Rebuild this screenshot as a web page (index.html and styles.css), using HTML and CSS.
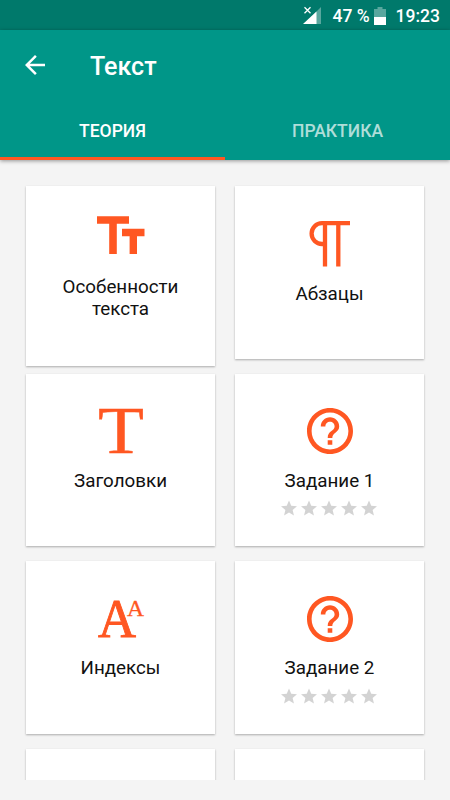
FILE: index.html
```html
<!DOCTYPE html>
<html lang="ru">
<head>
<meta charset="utf-8">
<title>Текст</title>
<link rel="stylesheet" href="styles.css">
</head>
<body>
<svg class="defs" width="0" height="0" aria-hidden="true">
  <symbol id="star" viewBox="2 2 20 19"><path d="M12 17.27 18.18 21l-1.64-7.03L22 9.24l-7.19-.61L12 2 9.19 8.63 2 9.24l5.46 4.73L5.82 21z"/></symbol>
  <symbol id="help" viewBox="2 2 20 20"><path d="M11 18h2v-2h-2v2zm1-16C6.48 2 2 6.48 2 12s4.48 10 10 10 10-4.48 10-10S17.52 2 12 2zm0 18c-4.41 0-8-3.59-8-8s3.59-8 8-8 8 3.59 8 8-3.59 8-8 8zm0-14c-2.21 0-4 1.79-4 4h2c0-1.1.9-2 2-2s2 .9 2 2c0 2-3 1.75-3 5h2c0-2.25 3-2.5 3-5 0-2.21-1.79-4-4-4z"/></symbol>
</svg>
<div class="status">
  <svg class="signal" width="20" height="20" viewBox="0 0 20 20">
    <path d="M18 1v17H1z" fill="#fff" fill-opacity=".35"/>
    <path d="M13.5 5.5V18H0z" fill="#fff"/>
    <path d="M0 0h8.5v8.5H0z" fill="#00796b"/>
    <path d="M1.5 1.2l6 6M7.5 1.2l-6 6" stroke="#fff" stroke-width="1.3"/>
  </svg>
  <span class="percent">47 %</span>
  <svg class="battery" width="12" height="18" viewBox="0 0 12 18">
    <path d="M3.5 0h5v2H12v8H0V2h3.5z" fill="#fff" fill-opacity=".35"/>
    <path d="M0 10h12v8H0z" fill="#fff"/>
  </svg>
  <span class="clock">19:23</span>
</div>
<header class="header">
  <div class="bar">
    <svg class="back" width="20" height="20" viewBox="4 4 16 16"><path d="M20 11H7.83l5.59-5.59L12 4l-8 8 8 8 1.41-1.41L7.83 13H20v-2z" fill="#fff"/></svg>
    <h1 class="title">Текст</h1>
  </div>
  <nav class="tabs">
    <a class="tab tab-active">ТЕОРИЯ</a>
    <a class="tab">ПРАКТИКА</a>
  </nav>
</header>
<main class="grid">
  <section class="card card-tall">
    <svg class="icon icon-size" width="48" height="38" viewBox="0 0 48 38"><path d="M0 4h32M16 4v34" stroke-width="7.6"/><path d="M25 16.5h22.5M36.3 16v22" stroke-width="7.4"/></svg>
    <p class="label">Особенности<br>текста</p>
  </section>
  <section class="card card-para">
    <svg class="icon icon-line" width="41" height="46" viewBox="0 0 41 46"><path d="M41 2.2H13a10.4 10.4 0 0 0 0 20.8h3M16 2v43.5M29.3 2v43.5" stroke-width="4.3"/></svg>
    <p class="label">Абзацы</p>
  </section>
  <section class="card">
    <svg class="icon glyph" width="46" height="46" viewBox="0 0 46 46"><text class="glyph-head" x="0" y="45" font-size="68" textLength="46" lengthAdjust="spacingAndGlyphs">T</text></svg>
    <p class="label">Заголовки</p>
  </section>
  <section class="card">
    <svg class="icon help"><use href="#help"/></svg>
    <p class="label">Задание 1</p>
    <div class="stars"><svg><use href="#star"/></svg><svg><use href="#star"/></svg><svg><use href="#star"/></svg><svg><use href="#star"/></svg><svg><use href="#star"/></svg></div>
  </section>
  <section class="card">
    <svg class="icon glyph" width="46" height="46" viewBox="0 0 46 46"><text class="glyph-heavy" x="0" y="40.5" font-size="54" textLength="38" lengthAdjust="spacingAndGlyphs">A</text><text class="glyph-small" x="29" y="20" font-size="24" textLength="17" lengthAdjust="spacingAndGlyphs">A</text></svg>
    <p class="label">Индексы</p>
  </section>
  <section class="card">
    <svg class="icon help"><use href="#help"/></svg>
    <p class="label">Задание 2</p>
    <div class="stars"><svg><use href="#star"/></svg><svg><use href="#star"/></svg><svg><use href="#star"/></svg><svg><use href="#star"/></svg><svg><use href="#star"/></svg></div>
  </section>
  <section class="card"></section>
  <section class="card"></section>
</main>
</body>
</html>
```
FILE: styles.css
```css
* { box-sizing: border-box; }

body {
  margin: 0;
  height: 800px;
  overflow: hidden;
  display: flex;
  flex-direction: column;
  background: #f4f4f4;
  color: #111;
  font-family: Roboto, sans-serif;
}

svg { display: block; flex: none; }
.defs { display: none; }

.status {
  flex: none;
  height: 30px;
  padding: 1px 10px 0 0;
  display: flex;
  align-items: center;
  justify-content: flex-end;
  background: #00796b;
  color: #fff;
  font-size: 17.5px;
  font-weight: 500;
  line-height: 30px;
}

.signal { margin-right: 9px; }
.percent { margin-right: 4px; }
.battery { margin-right: 10px; }

.header {
  flex: none;
  height: 130px;
  background: #009688;
  color: #fff;
  box-shadow: 0 1px 4px rgba(0, 0, 0, .4);
}

.bar {
  height: 72px;
  padding-left: 25px;
  display: flex;
  align-items: center;
  gap: 45px;
}

.back { margin-top: -2px; }

.title {
  margin: 1px 0 0;
  font-size: 25px;
  font-weight: 500;
}

.tabs { display: flex; height: 58px; }

.tab {
  flex: 1;
  padding-top: 1px;
  border-bottom: 3px solid transparent;
  text-align: center;
  font-size: 17.5px;
  font-weight: 500;
  line-height: 56px;
  color: rgba(255, 255, 255, .7);
}

.tab-active { color: #fff; border-bottom-color: #ff5722; }

.grid {
  flex: none;
  height: 620px;
  padding: 26px 26px 0;
  overflow: hidden;
  display: grid;
  grid-template-columns: 189px 189px;
  grid-auto-rows: 172.5px;
  gap: 15px 20px;
  align-items: start;
}

.card {
  height: 172.5px;
  padding-top: 34.5px;
  display: flex;
  flex-direction: column;
  align-items: center;
  background: #fff;
  box-shadow: 0 1px 2px rgba(0, 0, 0, .3);
}

.card-tall { height: 180px; padding-top: 30px; }

.icon { fill: #ff5722; }
.icon-size, .icon-line { fill: none; stroke: #ff5722; }
.glyph { font-family: "Liberation Serif", serif; overflow: visible; }
.glyph-head { stroke: #ff5722; stroke-width: .4; }
.glyph-heavy { stroke: #ff5722; stroke-width: .9; }
.glyph-small { stroke: #ff5722; stroke-width: .3; }
.help { width: 46px; height: 46px; }

.label {
  margin: 15.5px 0 0;
  font-size: 18.8px;
  line-height: 22px;
  text-align: center;
}

.card-tall .label { margin-top: 21.5px; }
.card-para .label { margin-top: 16px; }

.stars {
  margin: 8.5px 1px 0 0;
  display: flex;
  gap: 4px;
  fill: #d3d3d3;
}

.stars svg { width: 16px; height: 16px; }
```
